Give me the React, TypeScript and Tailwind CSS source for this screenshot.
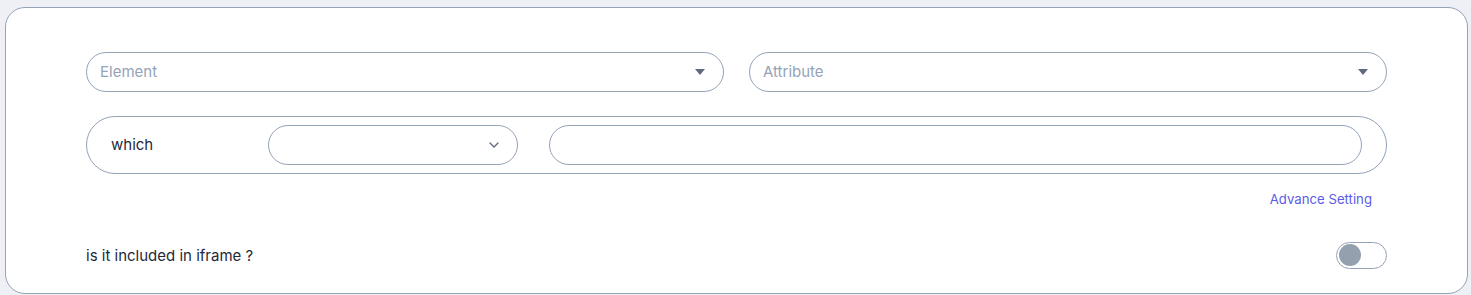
import { useState } from 'react';

function Caret() {
  return (
    <svg width="10" height="6" viewBox="0 0 10 6" className="text-[#5f6b7c]">
      <path d="M0 0h10L5 6z" fill="currentColor" />
    </svg>
  );
}

function SelectField({ placeholder }: { placeholder: string }) {
  return (
    <div className="flex h-[40px] flex-1 items-center justify-between rounded-full border border-[#94a3b8] pl-[13px] pr-[18px]">
      <span className="-mt-[1px] text-[15px] leading-none text-[#94a3b8]">{placeholder}</span>
      <Caret />
    </div>
  );
}

export default function App() {
  const [inIframe, setInIframe] = useState(false);

  return (
    <div
      className="min-h-[295px] bg-[#eef0f5] pl-[5px] pr-[3px] pt-[7px] text-[#1f2937]"
      style={{ fontFamily: 'Inter, "Noto Sans", sans-serif' }}
    >
      <div className="h-[287px] rounded-[20px] border border-[#94a3b8] bg-white px-[80px] pt-[44px]">
        <div className="flex gap-[25px]">
          <SelectField placeholder="Element" />
          <SelectField placeholder="Attribute" />
        </div>

        <div className="mt-[24px] flex h-[58px] items-center rounded-[29px] border border-[#94a3b8] pl-[24px] pr-[24px]">
          <span className="-mt-[1px] w-[157px] text-[15px] leading-none">which</span>
          <div className="flex h-[40px] w-[250px] items-center justify-end rounded-full border border-[#94a3b8] pr-[18px]">
            <svg width="10" height="6" viewBox="0 0 10 6" fill="none" className="text-[#5f6b7c]">
              <path d="M1 1l4 4 4-4" stroke="currentColor" strokeWidth="1.3" strokeLinecap="round" />
            </svg>
          </div>
          <input
            className="ml-[31px] h-[40px] flex-1 rounded-full border border-[#94a3b8] px-4 text-[14px] outline-none"
          />
        </div>

        <div className="mt-[16px] flex justify-end pr-[15px]">
          <button className="text-[13.2px] text-[#5b5be8]">Advance Setting</button>
        </div>

        <div className="mt-[32px] flex items-center justify-between">
          <span className="text-[15px] leading-none">is it included in iframe ?</span>
          <button
            onClick={() => setInIframe(!inIframe)}
            className="flex h-[27px] w-[51px] items-center rounded-full border border-[#94a3b8] px-[2px]"
          >
            <span className="h-[22px] w-[22px] rounded-full bg-[#94a0ae]" />
          </button>
        </div>
      </div>
    </div>
  );
}
